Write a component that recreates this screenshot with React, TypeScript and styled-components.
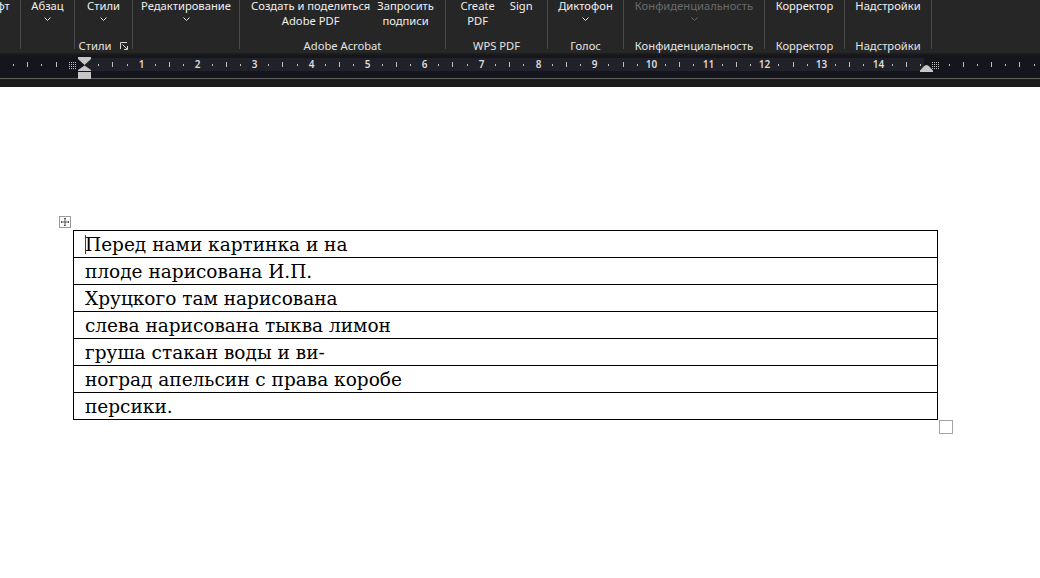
import React from "react";
import styled, { createGlobalStyle } from "styled-components";

const GlobalStyle = createGlobalStyle`
  html, body {
    margin: 0;
    padding: 0;
    background: #ffffff;
  }
  body {
    font-family: "Noto Sans", "Open Sans", sans-serif;
  }
`;

const Window = styled.div`
  width: 1040px;
  height: 578px;
  overflow: hidden;
  display: flex;
  flex-direction: column;
  background: #ffffff;
`;

/* ---------- ribbon ---------- */

const Ribbon = styled.div`
  flex: none;
  height: 53px;
  display: flex;
  background: #262626;
  overflow: hidden;
`;

const Group = styled.div<{ $width: number; $shift?: number }>`
  flex: none;
  box-sizing: border-box;
  width: ${(p) => p.$width}px;
  margin-left: ${(p) => p.$shift ?? 0}px;
  height: 49px;
  border-right: 1px solid #4a4a4a;
  display: flex;
  flex-direction: column;
  justify-content: space-between;
  align-items: center;
`;

const Buttons = styled.div<{ $gap?: number }>`
  display: flex;
  gap: ${(p) => p.$gap ?? 0}px;
  margin-top: -2px;
`;

const Button = styled.div<{ $muted?: boolean }>`
  display: flex;
  flex-direction: column;
  align-items: center;
  font-size: 11.2px;
  line-height: 15px;
  white-space: nowrap;
  color: ${(p) => (p.$muted ? "#6a6a6a" : "#f0f0f0")};
`;

const ChevronLine = styled.div`
  height: 15px;
  display: flex;
  align-items: center;
  margin-top: -2px;
`;

const GroupLabel = styled.div`
  display: flex;
  align-items: center;
  gap: 9px;
  font-size: 11.2px;
  line-height: 15px;
  color: #e4e4e4;
  white-space: nowrap;
  margin-bottom: -4px;
`;

const Chevron = ({ muted }: { muted?: boolean }) => (
  <ChevronLine>
    <svg width="7" height="4" viewBox="0 0 7 4">
      <path
        d="M0.5 0.5L3.5 3.5L6.5 0.5"
        fill="none"
        stroke={muted ? "#6a6a6a" : "#e8e8e8"}
        strokeWidth="1"
      />
    </svg>
  </ChevronLine>
);

const Launcher = () => (
  <svg width="8" height="8" viewBox="0 0 8 8">
    <path d="M0.5 7V0.5H7" fill="none" stroke="#d8d8d8" strokeWidth="1" />
    <path d="M2.5 2.5L7 7M4 7.5H7.5V4" fill="none" stroke="#d8d8d8" strokeWidth="1" />
  </svg>
);

/* ---------- ruler ---------- */

const RulerStrip = styled.div`
  flex: none;
  box-sizing: border-box;
  height: 34px;
  padding-top: 2px;
  background: #1c1c1c;
`;

const RulerBar = styled.div`
  position: relative;
  height: 23px;
  background: #15151e;
  border-bottom: 1px solid #5e5e5e;
`;

const ActiveBand = styled.div`
  position: absolute;
  left: 84px;
  width: 840px;
  top: 3px;
  height: 13px;
  background: #212129;
`;

const Mark = styled.span.attrs<{ $x: number }>((p) => ({
  style: { left: `${p.$x}px` },
}))<{ $x: number }>`
  position: absolute;
`;

const Dot = styled(Mark)`
  top: 9px;
  width: 1px;
  height: 2px;
  background: #c0c0c0;
`;

const Tick = styled(Mark)`
  top: 7px;
  width: 1px;
  height: 5px;
  background: #c0c0c0;
`;

const Num = styled(Mark)`
  top: 3px;
  transform: translateX(-50%);
  font-size: 10px;
  line-height: 13px;
  font-weight: 600;
  color: #dcdcdc;
`;

const Pin = styled(Mark)<{ $top: number }>`
  top: ${(p) => p.$top}px;
  line-height: 0;
`;

const CM = 56.69;
const ORIGIN = 84;

const GridIcon = () => (
  <svg width="7" height="7" viewBox="0 0 7 7">
    {[0, 2, 4, 6].map((r) =>
      [0, 2, 4, 6].map((c) => (
        <rect key={`${r}-${c}`} x={c} y={r} width="1" height="1" fill="#bdbdbd" />
      ))
    )}
  </svg>
);

const Ruler = () => {
  const marks: React.ReactNode[] = [];
  for (let k = -6; k <= 68; k++) {
    const x = Math.round(ORIGIN + (CM / 4) * k);
    if (x < 2 || x > 1038 || k === 0 || k === -1 || k === 60) continue;
    if (k % 4 === 0 && k > 0 && k <= 56) {
      marks.push(
        <Num key={k} $x={x + 0.5}>
          {k / 4}
        </Num>
      );
    } else if (k % 2 === 0) {
      marks.push(<Tick key={k} $x={x} />);
    } else {
      marks.push(<Dot key={k} $x={x} />);
    }
  }

  return (
    <RulerStrip>
      <RulerBar>
        <ActiveBand />
        {marks}
        <Pin $x={69} $top={7}>
          <GridIcon />
        </Pin>
        <Pin $x={932} $top={7}>
          <GridIcon />
        </Pin>
        {/* first-line / hanging / left indent */}
        <Pin $x={78} $top={2}>
          <svg width="13" height="22" viewBox="0 0 13 22">
            <path d="M0 0H13V2L6.5 8L0 2Z" fill="#c6c6c6" />
            <path d="M6.5 8.5L13 13V14H0V13Z" fill="#c6c6c6" />
            <rect x="0" y="15" width="13" height="7" fill="#c6c6c6" />
          </svg>
        </Pin>
        {/* right indent */}
        <Pin $x={920} $top={9}>
          <svg width="13" height="8" viewBox="0 0 13 8">
            <path d="M0 8V6.5C2 5 4 1 6.5 1C9 1 11 5 13 6.5V8Z" fill="#c6c6c6" />
          </svg>
        </Pin>
      </RulerBar>
    </RulerStrip>
  );
};

/* ---------- document ---------- */

const Sheet = styled.div`
  flex: 1;
  background: #ffffff;
  padding: 143px 0 0 73px;
`;

const TableWrap = styled.div`
  position: relative;
  width: 865px;
`;

const TableBox = styled.div`
  box-sizing: border-box;
  width: 865px;
  border: 1px solid #000000;
`;

const Row = styled.div`
  box-sizing: border-box;
  height: 26px;
  padding: 1px 0 0 11px;
  font-family: "DejaVu Serif", "Liberation Serif", serif;
  font-size: 18.5px;
  line-height: 25px;
  color: #000000;
  white-space: nowrap;

  & + & {
    border-top: 1px solid #000000;
    height: 27px;
  }
`;

const Cursor = styled.span`
  display: inline-block;
  width: 1px;
  height: 19px;
  margin-right: -1px;
  vertical-align: -3px;
  background: #3a3a3a;
`;

const MoveHandle = styled.div`
  position: absolute;
  left: -14px;
  top: -14px;
  box-sizing: border-box;
  width: 12px;
  height: 12px;
  border: 1px solid #9a9a9a;
  background: #ffffff;
  display: flex;
  align-items: center;
  justify-content: center;
`;

const SizeHandle = styled.div`
  position: absolute;
  left: calc(100% + 1px);
  top: 100%;
  box-sizing: border-box;
  width: 14px;
  height: 14px;
  border: 1px solid #a4a4a4;
  background: #ffffff;
`;

const lines = [
  "Перед нами картинка и на",
  "плоде нарисована И.П.",
  "Хруцкого там нарисована",
  "слева нарисована тыква лимон",
  "груша стакан воды и ви-",
  "ноград апельсин с права коробе",
  "персики.",
];

const App = () => {
  return (
    <>
      <GlobalStyle />
      <Window>
        <Ribbon>
          <Group $width={60} $shift={-39}>
            <Buttons>
              <Button>
                Шрифт
                <Chevron />
              </Button>
            </Buttons>
          </Group>
          <Group $width={54}>
            <Buttons>
              <Button>
                Абзац
                <Chevron />
              </Button>
            </Buttons>
          </Group>
          <Group $width={58}>
            <Buttons>
              <Button>
                Стили
                <Chevron />
              </Button>
            </Buttons>
            <GroupLabel>
              Стили
              <Launcher />
            </GroupLabel>
          </Group>
          <Group $width={107}>
            <Buttons>
              <Button>
                Редактирование
                <Chevron />
              </Button>
            </Buttons>
          </Group>
          <Group $width={206}>
            <Buttons $gap={7}>
              <Button>
                <span>Создать и поделиться</span>
                <span>Adobe PDF</span>
              </Button>
              <Button>
                <span>Запросить</span>
                <span>подписи</span>
              </Button>
            </Buttons>
            <GroupLabel>Adobe Acrobat</GroupLabel>
          </Group>
          <Group $width={102}>
            <Buttons $gap={15}>
              <Button>
                <span>Create</span>
                <span>PDF</span>
              </Button>
              <Button>Sign</Button>
            </Buttons>
            <GroupLabel>WPS PDF</GroupLabel>
          </Group>
          <Group $width={76}>
            <Buttons>
              <Button>
                Диктофон
                <Chevron />
              </Button>
            </Buttons>
            <GroupLabel>Голос</GroupLabel>
          </Group>
          <Group $width={141}>
            <Buttons>
              <Button $muted>
                Конфиденциальность
                <Chevron muted />
              </Button>
            </Buttons>
            <GroupLabel>Конфиденциальность</GroupLabel>
          </Group>
          <Group $width={80}>
            <Buttons>
              <Button>Корректор</Button>
            </Buttons>
            <GroupLabel>Корректор</GroupLabel>
          </Group>
          <Group $width={87}>
            <Buttons>
              <Button>Надстройки</Button>
            </Buttons>
            <GroupLabel>Надстройки</GroupLabel>
          </Group>
        </Ribbon>

        <Ruler />

        <Sheet>
          <TableWrap>
            <MoveHandle>
              <svg width="10" height="10" viewBox="0 0 10 10">
                <path
                  d="M5 1V9M1 5H9M4 2L5 1L6 2M4 8L5 9L6 8M2 4L1 5L2 6M8 4L9 5L8 6"
                  fill="none"
                  stroke="#555555"
                  strokeWidth="1"
                />
              </svg>
            </MoveHandle>
            <TableBox>
              {lines.map((text, i) => (
                <Row key={i}>
                  {i === 0 && <Cursor />}
                  {text}
                </Row>
              ))}
            </TableBox>
            <SizeHandle />
          </TableWrap>
        </Sheet>
      </Window>
    </>
  );
};

export default App;
